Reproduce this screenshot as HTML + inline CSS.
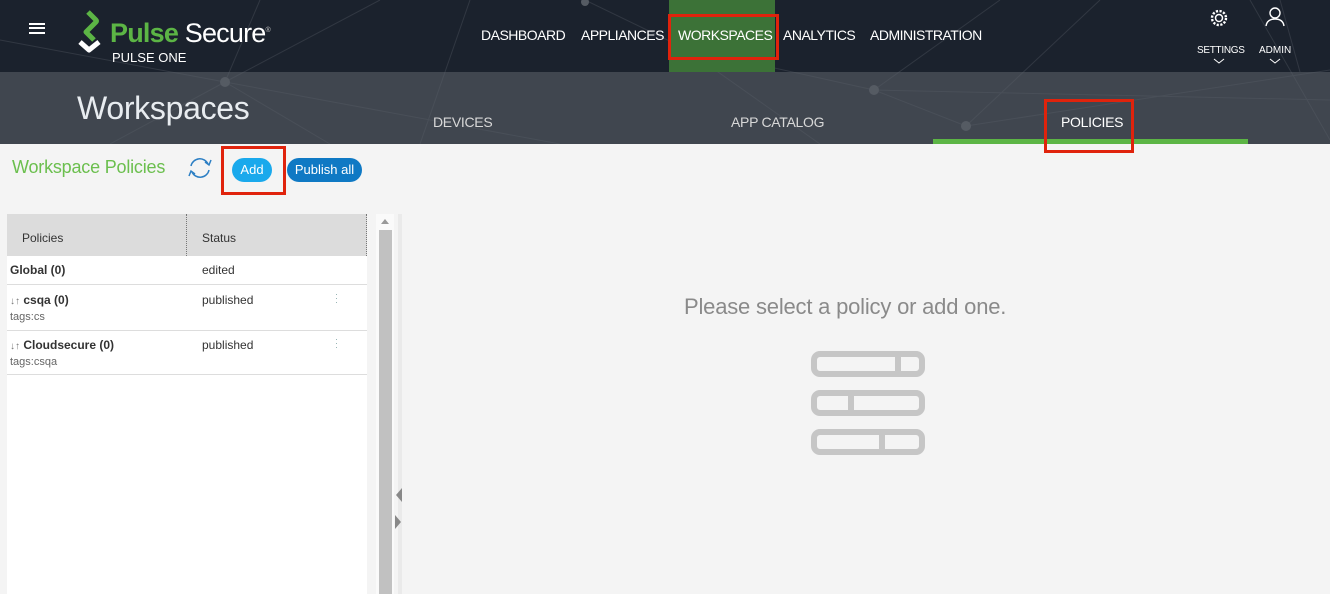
<!DOCTYPE html>
<html><head><meta charset="utf-8"><style>
*{margin:0;padding:0;box-sizing:border-box}
body{width:1330px;height:594px;overflow:hidden;background:#f4f4f4;font-family:"Liberation Sans",sans-serif;position:relative}
.abs{position:absolute}
.top{left:0;top:0;width:1330px;height:72px;background:#1b222d}
.sub{left:0;top:72px;width:1330px;height:72px;background:#40464f}
.nav{top:27px;color:#fff;font-size:14px;white-space:nowrap;letter-spacing:-0.5px}
.tab{top:114px;color:#d8d8d8;font-size:14px;letter-spacing:-0.3px}
.red{border:3px solid #e0230c}
</style></head><body>
<div class="abs top"></div>
<div class="abs sub"></div>
<svg class="abs" style="left:0;top:0" width="1330" height="144">
<g stroke="#5a6069" stroke-width="1" opacity="0.35" fill="none">
<line x1="0" y1="40" x2="225" y2="82"/><line x1="225" y1="82" x2="380" y2="0"/><line x1="225" y1="82" x2="110" y2="144"/>
<line x1="225" y1="82" x2="560" y2="144"/><line x1="225" y1="82" x2="330" y2="144"/><line x1="225" y1="82" x2="260" y2="0"/>
<line x1="585" y1="0" x2="684" y2="48"/><line x1="684" y1="48" x2="735" y2="0"/><line x1="684" y1="48" x2="820" y2="144"/>
<line x1="684" y1="48" x2="874" y2="90"/><line x1="874" y1="90" x2="966" y2="126"/><line x1="966" y1="126" x2="1330" y2="70"/>
<line x1="874" y1="90" x2="1000" y2="0"/><line x1="966" y1="126" x2="1100" y2="0"/><line x1="1250" y1="0" x2="1330" y2="140"/>
<line x1="1280" y1="0" x2="1300" y2="72"/><line x1="420" y1="144" x2="470" y2="0"/><line x1="874" y1="90" x2="1330" y2="100"/>
</g>
<g fill="#555b63"><circle cx="225" cy="82" r="5"/><circle cx="874" cy="90" r="5"/><circle cx="966" cy="126" r="5"/><circle cx="585" cy="2" r="4"/></g>
</svg>
<div class="abs" style="left:669px;top:0;width:106px;height:72px;background:#3c7237"></div>
<div class="abs" style="left:29px;top:23px;width:16px;height:11px;border-top:2px solid #fff;border-bottom:2px solid #fff"></div>
<div class="abs" style="left:29px;top:27px;width:16px;height:3px;border-top:2px solid #fff"></div>
<svg class="abs" style="left:76px;top:9px" width="30" height="44"><path d="M12 3 L20 11 Q21 12 20 13 L10 23 L18 31" stroke="#5cb545" stroke-width="5" fill="none" stroke-linejoin="round"/><path d="M4 33 L13 41 L23 33" stroke="#fff" stroke-width="5" fill="none" stroke-linejoin="round"/></svg>
<div class="abs" style="left:110px;top:18px;font-size:27px;letter-spacing:-0.8px;white-space:nowrap"><span style="color:#5cb545;font-weight:bold">Pulse</span> <span style="color:#fff">Secure</span><sup style="color:#ccc;font-size:7px">®</sup></div>
<div class="abs" style="left:112px;top:50px;color:#fff;font-size:13px">PULSE ONE</div>
<div class="abs nav" style="left:481px">DASHBOARD</div>
<div class="abs nav" style="left:581px">APPLIANCES</div>
<div class="abs nav" style="left:678px">WORKSPACES</div>
<div class="abs nav" style="left:783px">ANALYTICS</div>
<div class="abs nav" style="left:870px">ADMINISTRATION</div>
<div class="abs red" style="left:668px;top:14px;width:111px;height:46px"></div>
<svg class="abs" style="left:1209px;top:8px" width="20" height="20"><circle cx="10" cy="10" r="3.5" stroke="#fff" stroke-width="1.5" fill="none"/><circle cx="10" cy="10" r="7" stroke="#fff" stroke-width="2.4" stroke-dasharray="2.2 1.5" fill="none"/></svg>
<svg class="abs" style="left:1264px;top:6px" width="22" height="22"><circle cx="11" cy="7" r="5" stroke="#fff" stroke-width="1.4" fill="none"/><path d="M2 20 Q3 13 11 13 Q19 13 20 20" stroke="#fff" stroke-width="1.4" fill="none"/></svg>
<div class="abs" style="left:1197px;top:45px;color:#fff;font-size:10px;letter-spacing:-0.3px">SETTINGS</div>
<div class="abs" style="left:1259px;top:45px;color:#fff;font-size:10px">ADMIN</div>
<svg class="abs" style="left:1213px;top:57px" width="12" height="8"><path d="M1 2 L6 6 L11 2" stroke="#fff" fill="none"/></svg>
<svg class="abs" style="left:1269px;top:57px" width="12" height="8"><path d="M1 2 L6 6 L11 2" stroke="#fff" fill="none"/></svg>
<div class="abs" style="left:77px;top:90px;color:#e8ecf0;font-size:32px;letter-spacing:-0.3px">Workspaces</div>
<div class="abs tab" style="left:433px">DEVICES</div>
<div class="abs tab" style="left:731px">APP CATALOG</div>
<div class="abs tab" style="left:1061px;color:#fff">POLICIES</div>
<div class="abs" style="left:933px;top:139px;width:315px;height:5px;background:#5cb545"></div>
<div class="abs red" style="left:1044px;top:99px;width:90px;height:54px"></div>
<div class="abs" style="left:12px;top:157px;color:#6bbf4e;font-size:18px;letter-spacing:-0.2px">Workspace Policies</div>
<svg class="abs" style="left:186px;top:156px" width="28" height="24"><path d="M5 10 A9 9 0 0 1 22 8" stroke="#2c7fc4" stroke-width="1.5" fill="none"/><path d="M23 14 A9 9 0 0 1 6 16" stroke="#2c7fc4" stroke-width="1.5" fill="none"/><path d="M19 6 L23 9 L25 4" stroke="#2c7fc4" stroke-width="1.5" fill="none"/><path d="M9 18 L5 15 L3 20" stroke="#2c7fc4" stroke-width="1.5" fill="none"/></svg>
<div class="abs" style="left:232px;top:158px;width:40px;height:24px;background:#1aa9ec;border-radius:12px;color:#fff;font-size:13px;text-align:center;line-height:24px">Add</div>
<div class="abs red" style="left:221px;top:146px;width:65px;height:49px"></div>
<div class="abs" style="left:287px;top:158px;width:75px;height:24px;background:#0f79c4;border-radius:12px;color:#fff;font-size:13px;text-align:center;line-height:24px">Publish all</div>
<div class="abs" style="left:7px;top:214px;width:360px;height:380px;background:#fff"></div>
<div class="abs" style="left:7px;top:214px;width:360px;height:42px;background:#dcdcdc;border-right:1px dotted #777"></div>
<div class="abs" style="left:186px;top:214px;width:1px;height:42px;border-left:1px dotted #777"></div>
<div class="abs" style="left:22px;top:231px;font-size:12px;color:#333">Policies</div>
<div class="abs" style="left:202px;top:231px;font-size:12px;color:#333">Status</div>
<div class="abs" style="left:10px;top:263px;font-size:12px;color:#333;font-weight:bold">Global (0)</div>
<div class="abs" style="left:202px;top:263px;font-size:12px;color:#333">edited</div>
<div class="abs" style="left:7px;top:284px;width:360px;border-top:1px solid #ddd"></div>
<div class="abs" style="left:10px;top:293px;font-size:12px;color:#333"><span style="color:#777;font-size:10px">↓↑</span> <b>csqa (0)</b></div>
<div class="abs" style="left:10px;top:311px;font-size:11px;color:#666">tags:cs</div>
<div class="abs" style="left:202px;top:293px;font-size:12px;color:#333">published</div>
<div class="abs" style="left:335px;top:292px;font-size:9px;color:#8aa;line-height:4px">·<br>·<br>·</div>
<div class="abs" style="left:7px;top:330px;width:360px;border-top:1px solid #ddd"></div>
<div class="abs" style="left:10px;top:338px;font-size:12px;color:#333"><span style="color:#777;font-size:10px">↓↑</span> <b>Cloudsecure (0)</b></div>
<div class="abs" style="left:10px;top:356px;font-size:11px;color:#666">tags:csqa</div>
<div class="abs" style="left:202px;top:338px;font-size:12px;color:#333">published</div>
<div class="abs" style="left:335px;top:337px;font-size:9px;color:#8aa;line-height:4px">·<br>·<br>·</div>
<div class="abs" style="left:7px;top:374px;width:360px;border-top:1px solid #ddd"></div>
<div class="abs" style="left:376px;top:214px;width:18px;height:380px;background:#fafafa"></div>
<div class="abs" style="left:379px;top:230px;width:13px;height:364px;background:#c1c1c1"></div>
<div class="abs" style="left:381px;top:219px;width:0;height:0;border:4px solid transparent;border-bottom:5px solid #999;border-top:0"></div>
<div class="abs" style="left:398px;top:214px;width:4px;height:380px;background:#eaeaea"></div>
<div class="abs" style="left:396px;top:488px;width:0;height:0;border:7px solid transparent;border-right:6px solid #888;border-left:0"></div>
<div class="abs" style="left:395px;top:515px;width:0;height:0;border:7px solid transparent;border-left:6px solid #888;border-right:0"></div>
<div class="abs" style="left:684px;top:294px;font-size:22px;color:#8a8a8a;letter-spacing:-0.2px">Please select a policy or add one.</div>
<svg class="abs" style="left:809px;top:349px" width="120" height="106" fill="none" stroke="#c6c6c6" stroke-width="6">
<rect x="5" y="5" width="108" height="20" rx="6"/><line x1="89" y1="5" x2="89" y2="25"/>
<rect x="5" y="44" width="108" height="20" rx="6"/><line x1="42" y1="44" x2="42" y2="64"/>
<rect x="5" y="83" width="108" height="20" rx="6"/><line x1="73" y1="83" x2="73" y2="103"/>
</svg>
</body></html>
